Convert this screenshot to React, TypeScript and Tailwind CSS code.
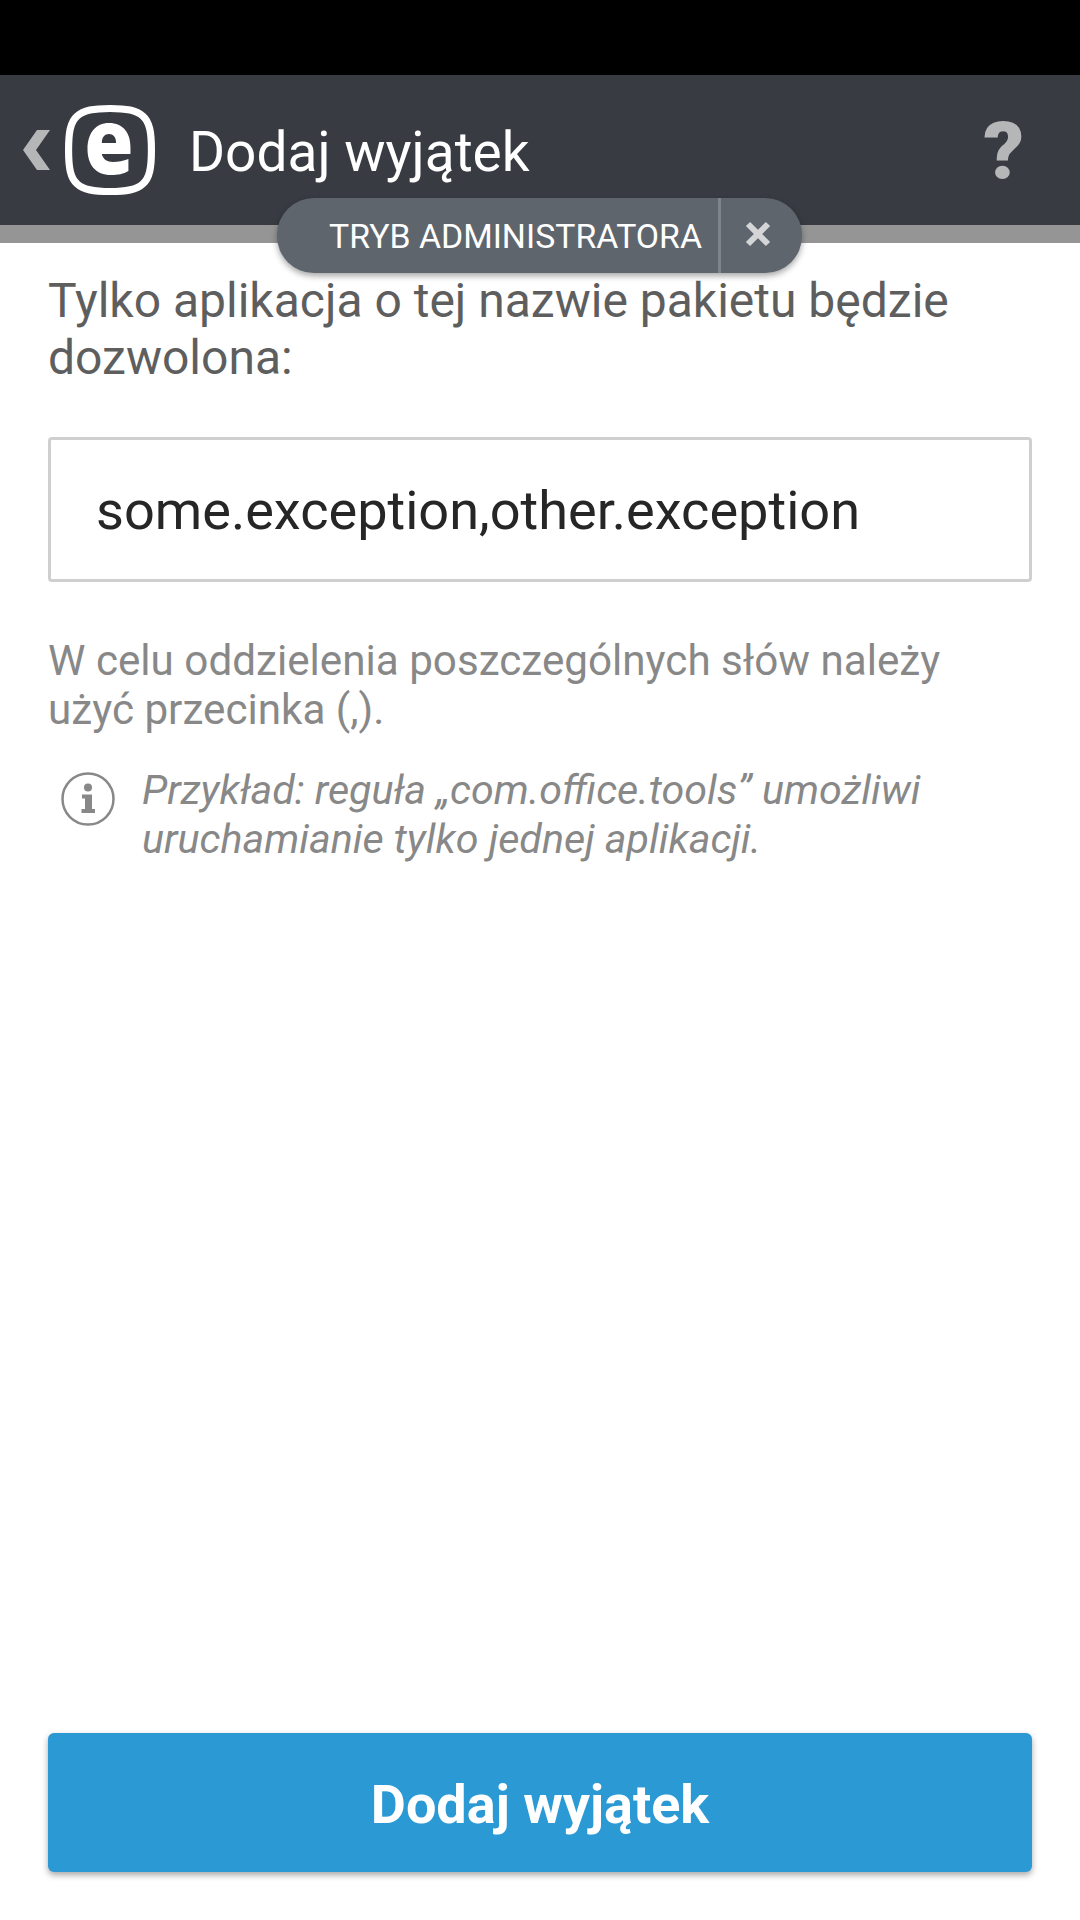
import React from 'react';

const EsetLogo: React.FC = () => (
  <svg width="90" height="90" viewBox="0 0 88 90" preserveAspectRatio="none" className="shrink-0">
    <path
      d="M44 3.5C60 3.5 70 5 76 11C83 17 84.5 28 84.5 45C84.5 62 83 73 76 79C70 85 60 86.5 44 86.5C28 86.5 18 85 12 79C5 73 3.5 62 3.5 45C3.5 28 5 17 12 11C18 5 28 3.5 44 3.5Z"
      fill="none"
      stroke="#fff"
      strokeWidth="7"
    />
    <path
      fillRule="evenodd"
      fill="#fff"
      d="M43 18C57 18 64 28 64 42V49H36C37 54 41 57 47 57C52 57 57 56 62 54V66C57 69 52 70 45 70C30 70 22 60 22 44C22 28 30 18 43 18ZM43 29C39 29 36 32 36 38H50C50 32 47 29 43 29Z"
    />
  </svg>
);

const InfoIcon: React.FC = () => (
  <svg width="54" height="54" viewBox="0 0 54 54" className="shrink-0">
    <circle cx="27" cy="27" r="25.5" fill="none" stroke="#888" strokeWidth="2.5" />
    <circle cx="27" cy="15.5" r="4" fill="#888" />
    <path d="M21 22.5H31V37H34V41H20.5V37H24V26.5H21Z" fill="#888" />
  </svg>
);

const App: React.FC = () => {
  return (
    <div className="relative flex h-[1920px] w-[1080px] flex-col overflow-hidden bg-white font-['Roboto',sans-serif]">
      <div className="h-[75px] bg-black" />

      <header className="flex h-[150px] items-center bg-[#383b42] pl-[23px] pr-[56px]">
        <svg width="28" height="40" viewBox="0 0 28 40" className="shrink-0">
          <path d="M14 0H27L13 20L27 40H14L0 20Z" fill="#b4b6b8" />
        </svg>
        <div className="ml-[14px]">
          <EsetLogo />
        </div>
        <h1 className="ml-[34px] mt-[3px] text-[55px] leading-[64px] font-normal text-white">Dodaj wyjątek</h1>
        <span className="ml-auto mt-[4px] text-[80px] leading-[80px] font-black text-[#b4b6b8]">?</span>
      </header>
      <div className="h-[18px] bg-[#959595]" />

      {/* admin mode pill sits over the header edge */}
      <div className="absolute left-[277px] top-[198px] flex h-[75px] w-[525px] items-stretch rounded-[37px] bg-[#5f656d] shadow-[0_3px_6px_rgba(0,0,0,0.35)]">
        <div className="flex flex-1 items-center pl-[52px] pt-[3px] text-[33.8px] text-white">TRYB ADMINISTRATORA</div>
        <div className="w-[3px] bg-[#7f848b]" />
        <div className="flex w-[81px] items-center justify-center pr-[7px] pb-[4px]">
          <svg width="26" height="26" viewBox="0 0 26 26">
            <path d="M3 3L23 23M23 3L3 23" stroke="#d4d5d7" strokeWidth="6" />
          </svg>
        </div>
      </div>

      <main className="flex flex-1 flex-col px-[48px]">
        <p className="mt-[29px] text-[48px] leading-[57px] text-[#5e5e5e]">
          Tylko aplikacja o tej nazwie pakietu będzie dozwolona:
        </p>

        <div className="mt-[51px] flex h-[145px] items-center rounded-[4px] border-[3px] border-[#cfcfcf] pl-[45px] pt-[2px] text-[54.1px] text-[#262626]">
          some.exception,other.exception
        </div>

        <p className="mt-[54px] text-[42.2px] leading-[49px] text-[#888888]">
          W celu oddzielenia poszczególnych słów należy użyć przecinka (,).
        </p>

        <div className="mt-[32px] flex items-start pl-[13px]">
          <div className="mt-[6px]">
            <InfoIcon />
          </div>
          <p className="ml-[27px] text-[41.2px] leading-[49px] text-[#888888] italic">
            Przykład: reguła „com.office.tools” umożliwi uruchamianie tylko jednej aplikacji.
          </p>
        </div>

        <button className="mb-[48px] mt-auto h-[139px] w-full rounded-[6px] bg-[#2b9ad4] pt-[3px] text-[54px] font-bold text-white shadow-[0_3px_6px_rgba(0,0,0,0.35)]">
          Dodaj wyjątek
        </button>
      </main>
    </div>
  );
};

export default App;
